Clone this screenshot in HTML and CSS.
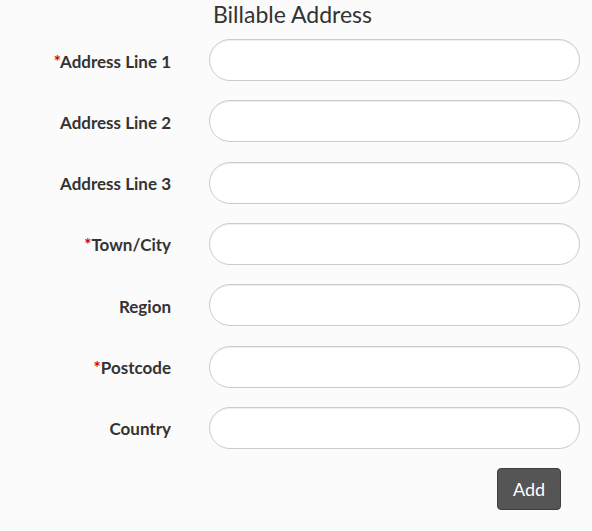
FILE: index.html
```html
<!DOCTYPE html>
<html>
<head>
<meta charset="utf-8">
<link rel="stylesheet" href="styles.css">
</head>
<body>
<div class="page">
  <h2 class="title">Billable Address</h2>
  <form class="form">
    <label class="label"><span class="req">*</span>Address Line 1</label>
    <input class="field" type="text">
    <label class="label">Address Line 2</label>
    <input class="field" type="text">
    <label class="label">Address Line 3</label>
    <input class="field" type="text">
    <label class="label"><span class="req">*</span>Town/City</label>
    <input class="field" type="text">
    <label class="label">Region</label>
    <input class="field" type="text">
    <label class="label"><span class="req">*</span>Postcode</label>
    <input class="field" type="text">
    <label class="label">Country</label>
    <input class="field" type="text">
    <div class="actions"><button type="button" class="btn">Add</button></div>
  </form>
</div>
</body>
</html>
```
FILE: styles.css
```css
html, body {
  margin: 0;
  padding: 0;
  background: #fbfbfb;
}
body {
  font-family: Lato, "Open Sans", sans-serif;
  color: #333;
}
.page {
  width: 585px;
}
.title {
  margin: 0;
  padding-top: 1px;
  height: 38px;
  font-size: 23px;
  font-weight: 400;
  line-height: 27px;
  text-align: center;
  color: #333;
}
.form {
  display: grid;
  grid-template-columns: 171px 371px;
  column-gap: 38px;
  row-gap: 19.33px;
  align-items: center;
}
.label {
  text-align: right;
  font-weight: 700;
  font-size: 17px;
  padding-top: 2px;
  color: #333;
}
.req {
  color: #d00;
}
.field {
  box-sizing: border-box;
  height: 42px;
  width: 371px;
  border: 1px solid #ccc;
  border-radius: 21px;
  background: #fff;
  box-shadow: inset 0 1px 1px rgba(0,0,0,0.075);
  padding: 0 16px;
  font-family: inherit;
  font-size: 16px;
  outline: none;
}
.actions {
  grid-column: 2;
  display: flex;
  justify-content: flex-end;
  padding-right: 19px;
}
.btn {
  box-sizing: border-box;
  width: 64px;
  height: 42px;
  background: #555;
  color: #fff;
  border: 1px solid #3f3f3f;
  border-radius: 4px;
  font-family: Lato, sans-serif;
  font-size: 18px;
  padding: 0;
}
```
